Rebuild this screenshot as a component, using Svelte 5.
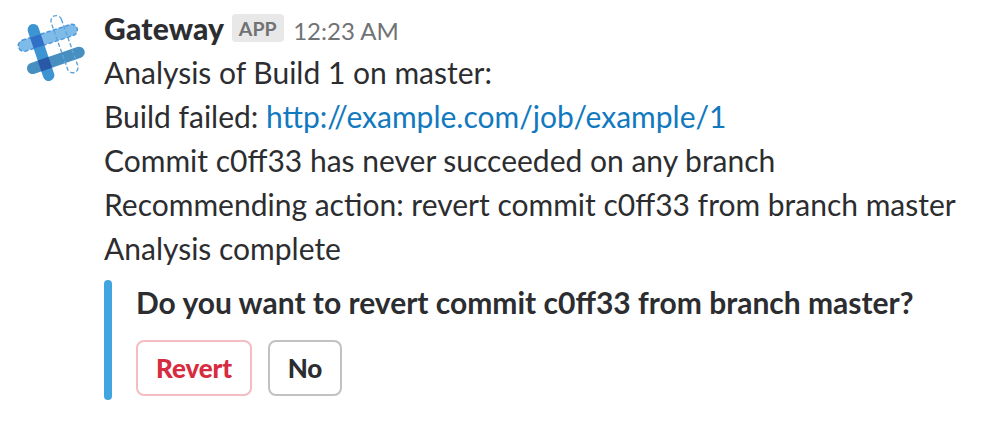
<script>
  const lines = ['Commit c0ff33 has never succeeded on any branch', 'Recommending action: revert commit c0ff33 from branch master', 'Analysis complete'];
</script>

<article class="message">
  <svg class="avatar" width="72" height="72" viewBox="0 0 72 72" aria-hidden="true">
    <defs>
      <clipPath id="post"><rect x="-5.7" y="-5.7" width="59.5" height="11.4" rx="5.7" transform="translate(17.3 17.7) rotate(71.4)" /></clipPath>
    </defs>
    <g fill="none">
      <rect x="-5.7" y="-5.7" width="59.5" height="11.4" rx="5.7" transform="translate(17.3 17.7) rotate(71.4)" fill="#3c94d2" />
      <rect x="-5.7" y="-5.7" width="60.4" height="11.4" rx="5.7" transform="translate(16.7 56.3) rotate(-19)" fill="#478fc1" />
      <rect x="-5.7" y="-5.7" width="61.6" height="11.4" rx="5.7" transform="translate(8 33.7) rotate(-18.2)" fill="#7fbbe9" stroke="#4a96da" stroke-width="1.4" stroke-dasharray="4.2 2.2" />
      <g clip-path="url(#post)">
        <rect x="-5.7" y="-6" width="61.6" height="12" rx="5.7" transform="translate(8 33.7) rotate(-18.2)" fill="#3070c7" />
        <rect x="-5.7" y="-5.7" width="60.4" height="11.4" rx="5.7" transform="translate(16.7 56.3) rotate(-19)" fill="#2858a8" />
      </g>
      <rect x="-5.4" y="-5.4" width="60" height="10.8" rx="5.4" transform="translate(40.3 9) rotate(70.5)" stroke="#5fa3d6" stroke-width="1.4" stroke-dasharray="4.2 2.2" />
    </g>
  </svg>
  <div class="content">
    <header><span class="name">Gateway</span><span class="badge">APP</span><time>12:23 AM</time></header>
    <p><span>Analysis of Build 1 on master:</span></p>
    <p><span>Build failed:</span> <a href="http://example.com/job/example/1">http://example.com/job/example/1</a></p>
    {#each lines as line}<p><span>{line}</span></p>{/each}
    <section>
      <div class="bar"></div>
      <div class="body">
        <h3>Do you want to revert commit c0ff33 from branch master?</h3>
        <div class="actions"><button class="danger">Revert</button><button class="neutral">No</button></div>
      </div>
    </section>
  </div>
</article>

<style>
  :global(body) { margin: 0; background: #fff; }
  .message { display: flex; box-sizing: border-box; width: 982px; height: 424px; padding: 6px 0 0 16px; font-family: Lato, sans-serif; color: #2c2d30; }
  .avatar { flex: none; margin: 6px 16px 0 0; }
  .content { white-space: nowrap; }
  header { display: flex; align-items: center; height: 44px; }
  .name { font-size: 30px; font-weight: 900; letter-spacing: 0.2px; }
  .badge { box-sizing: border-box; width: 52px; margin: 0 9.5px 0 7.5px; text-align: center; height: 28px; line-height: 29px; background: #e8e8e8; color: #717274; font-size: 19.5px; font-weight: 700; border-radius: 4px; }
  time { font-size: 24px; color: #717274; padding-top: 4px; }
  p { margin: 0; font-size: 30px; line-height: 44px; height: 44px; }
  a { color: #1279bf; text-decoration: none; }
  section { display: flex; gap: 24px; margin-top: 10px; }
  .bar { width: 8px; height: 120px; border-radius: 4px; background: #42a4e0; }
  h3 { margin: 0; font-size: 30px; line-height: 44px; font-weight: 700; }
  .actions { display: flex; gap: 16px; margin-top: 16px; }
  button { box-sizing: border-box; height: 56px; padding: 0; border: 2px solid #c0c1c2; border-radius: 8px; background: #fff; font: 900 26px Lato, sans-serif; letter-spacing: -0.1px; color: #2c2d30; }
  .danger { width: 116px; color: #d72b3f; border-color: #f5bcc4; }
  .neutral { width: 74px; }
</style>
